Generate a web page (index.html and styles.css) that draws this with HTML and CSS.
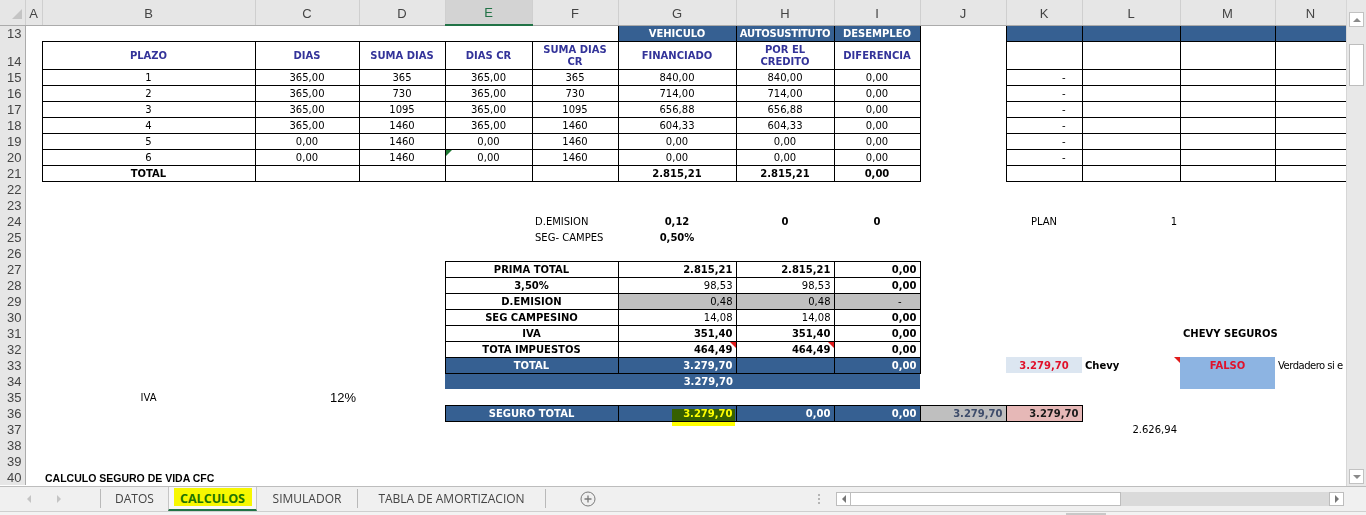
FILE: index.html
```html
<!DOCTYPE html>
<html lang="es">
<head>
<meta charset="utf-8">
<title>CALCULOS</title>
<link rel="stylesheet" href="styles.css">
</head>
<body>
<div class="app">
  <div class="main">
    <div class="sheet">
      <table class="grid">
        <colgroup>
          <col class="w-rh"><col class="w-a"><col class="w-b"><col class="w-c"><col class="w-d"><col class="w-e"><col class="w-f"><col class="w-g"><col class="w-h"><col class="w-i"><col class="w-j"><col class="w-k"><col class="w-l"><col class="w-m"><col class="w-n">
        </colgroup>
        <tr class="colhdr">
          <th class="corner"><span class="selall"></span></th>
          <th>A</th><th>B</th><th>C</th><th>D</th><th class="sel">E</th><th>F</th><th>G</th><th>H</th><th>I</th><th>J</th><th>K</th><th>L</th><th>M</th><th>N</th>
        </tr>
        <tr>
          <th class="rh">13</th><td></td><td></td><td></td><td></td><td></td><td></td>
          <td class="bx blu c">VEHICULO</td><td class="bx blu c tight">AUTOSUSTITUTO</td><td class="bx blu c">DESEMPLEO</td><td></td>
          <td class="bx blu"></td><td class="bx blu"></td><td class="bx blu"></td><td class="bx blu"></td>
        </tr>
        <tr class="tall">
          <th class="rh">14</th><td></td>
          <td class="bx hd">PLAZO</td><td class="bx hd">DIAS</td><td class="bx hd">SUMA DIAS</td><td class="bx hd">DIAS CR</td>
          <td class="bx hd">SUMA DIAS<br>CR</td><td class="bx hd">FINANCIADO</td><td class="bx hd">POR EL<br>CREDITO</td><td class="bx hd">DIFERENCIA</td><td></td>
          <td class="bx"></td><td class="bx"></td><td class="bx"></td><td class="bx"></td>
        </tr>
        <tr>
          <th class="rh">15</th><td></td>
          <td class="bx c">1</td><td class="bx c">365,00</td><td class="bx c">365</td><td class="bx c">365,00</td><td class="bx c">365</td><td class="bx c">840,00</td><td class="bx c">840,00</td><td class="bx c">0,00</td><td></td>
          <td class="bx dash">-</td><td class="bx"></td><td class="bx"></td><td class="bx"></td>
        </tr>
        <tr>
          <th class="rh">16</th><td></td>
          <td class="bx c">2</td><td class="bx c">365,00</td><td class="bx c">730</td><td class="bx c">365,00</td><td class="bx c">730</td><td class="bx c">714,00</td><td class="bx c">714,00</td><td class="bx c">0,00</td><td></td>
          <td class="bx dash">-</td><td class="bx"></td><td class="bx"></td><td class="bx"></td>
        </tr>
        <tr>
          <th class="rh">17</th><td></td>
          <td class="bx c">3</td><td class="bx c">365,00</td><td class="bx c">1095</td><td class="bx c">365,00</td><td class="bx c">1095</td><td class="bx c">656,88</td><td class="bx c">656,88</td><td class="bx c">0,00</td><td></td>
          <td class="bx dash">-</td><td class="bx"></td><td class="bx"></td><td class="bx"></td>
        </tr>
        <tr>
          <th class="rh">18</th><td></td>
          <td class="bx c">4</td><td class="bx c">365,00</td><td class="bx c">1460</td><td class="bx c">365,00</td><td class="bx c">1460</td><td class="bx c">604,33</td><td class="bx c">604,33</td><td class="bx c">0,00</td><td></td>
          <td class="bx dash">-</td><td class="bx"></td><td class="bx"></td><td class="bx"></td>
        </tr>
        <tr>
          <th class="rh">19</th><td></td>
          <td class="bx c">5</td><td class="bx c">0,00</td><td class="bx c">1460</td><td class="bx c">0,00</td><td class="bx c">1460</td><td class="bx c">0,00</td><td class="bx c">0,00</td><td class="bx c">0,00</td><td></td>
          <td class="bx dash">-</td><td class="bx"></td><td class="bx"></td><td class="bx"></td>
        </tr>
        <tr>
          <th class="rh">20</th><td></td>
          <td class="bx c">6</td><td class="bx c">0,00</td><td class="bx c">1460</td><td class="bx c mark"><span class="tri-g"></span>0,00</td><td class="bx c">1460</td><td class="bx c">0,00</td><td class="bx c">0,00</td><td class="bx c">0,00</td><td></td>
          <td class="bx dash">-</td><td class="bx"></td><td class="bx"></td><td class="bx"></td>
        </tr>
        <tr>
          <th class="rh">21</th><td></td>
          <td class="bx c bd">TOTAL</td><td class="bx"></td><td class="bx"></td><td class="bx"></td><td class="bx"></td><td class="bx c bd">2.815,21</td><td class="bx c bd">2.815,21</td><td class="bx c bd">0,00</td><td></td>
          <td class="bx"></td><td class="bx"></td><td class="bx"></td><td class="bx"></td>
        </tr>
        <tr><th class="rh">22</th><td colspan="14"></td></tr>
        <tr><th class="rh">23</th><td colspan="14"></td></tr>
        <tr>
          <th class="rh">24</th><td colspan="5"></td>
          <td class="l">D.EMISION</td><td class="c bd">0,12</td><td class="c bd">0</td><td class="c bd">0</td><td></td>
          <td class="c">PLAN</td><td class="r">1</td><td></td><td></td>
        </tr>
        <tr>
          <th class="rh">25</th><td colspan="5"></td>
          <td class="l">SEG- CAMPES</td><td class="c bd">0,50%</td><td colspan="7"></td>
        </tr>
        <tr><th class="rh">26</th><td colspan="14"></td></tr>
        <tr>
          <th class="rh">27</th><td colspan="4"></td>
          <td class="bx c bd" colspan="2">PRIMA TOTAL</td><td class="bx r bd">2.815,21</td><td class="bx r bd">2.815,21</td><td class="bx r bd">0,00</td><td colspan="5"></td>
        </tr>
        <tr>
          <th class="rh">28</th><td colspan="4"></td>
          <td class="bx c bd" colspan="2">3,50%</td><td class="bx r">98,53</td><td class="bx r">98,53</td><td class="bx r bd">0,00</td><td colspan="5"></td>
        </tr>
        <tr>
          <th class="rh">29</th><td colspan="4"></td>
          <td class="bx c bd" colspan="2">D.EMISION</td><td class="bx r gry">0,48</td><td class="bx r gry">0,48</td><td class="bx gry dash2">-</td><td colspan="5"></td>
        </tr>
        <tr>
          <th class="rh">30</th><td colspan="4"></td>
          <td class="bx c bd" colspan="2">SEG CAMPESINO</td><td class="bx r">14,08</td><td class="bx r">14,08</td><td class="bx r bd">0,00</td><td colspan="5"></td>
        </tr>
        <tr>
          <th class="rh">31</th><td colspan="4"></td>
          <td class="bx c bd" colspan="2">IVA</td><td class="bx r bd">351,40</td><td class="bx r bd">351,40</td><td class="bx r bd">0,00</td><td colspan="3"></td>
          <td class="l bd">CHEVY SEGUROS</td><td></td>
        </tr>
        <tr>
          <th class="rh">32</th><td colspan="4"></td>
          <td class="bx c bd" colspan="2">TOTA IMPUESTOS</td><td class="bx r bd mark"><span class="tri-r"></span>464,49</td><td class="bx r bd mark"><span class="tri-r"></span>464,49</td><td class="bx r bd">0,00</td><td colspan="5"></td>
        </tr>
        <tr>
          <th class="rh">33</th><td colspan="4"></td>
          <td class="bx blu c" colspan="2">TOTAL</td><td class="bx blu r">3.279,70</td><td class="bx blu"></td><td class="bx blu r">0,00</td><td></td>
          <td class="c bd red k33">3.279,70</td><td class="l bd mark">Chevy<span class="tri-r"></span></td><td class="c bd red m33">FALSO</td><td class="l squeeze">Verdadero si e</td>
        </tr>
        <tr>
          <th class="rh">34</th><td colspan="4"></td>
          <td class="blu r" colspan="3">3.279,70</td><td class="blu" colspan="2"></td><td colspan="3"></td><td class="m33"></td><td></td>
        </tr>
        <tr>
          <th class="rh">35</th><td></td>
          <td class="c">IVA</td><td class="r cal">12%</td><td colspan="11"></td>
        </tr>
        <tr>
          <th class="rh">36</th><td colspan="4"></td>
          <td class="bx blu c" colspan="2">SEGURO TOTAL</td><td class="bx blu r mark">3.279,70<span class="hl"></span></td><td class="bx blu r">0,00</td><td class="bx blu r">0,00</td>
          <td class="bx r bd j36">3.279,70</td><td class="bx r bd k36">3.279,70</td><td colspan="3"></td>
        </tr>
        <tr>
          <th class="rh">37</th><td colspan="11"></td><td class="r">2.626,94</td><td colspan="2"></td>
        </tr>
        <tr><th class="rh">38</th><td colspan="14"></td></tr>
        <tr><th class="rh">39</th><td colspan="14"></td></tr>
        <tr>
          <th class="rh">40</th><td></td><td class="l cal bd">CALCULO SEGURO DE VIDA CFC</td><td colspan="12"></td>
        </tr>
      </table>
    </div>
    <div class="vsb">
      <div class="vbtn"><span class="up"></span></div>
      <div class="vthumb"></div>
      <div class="vfill"></div>
      <div class="vbtn"><span class="down"></span></div>
    </div>
  </div>
  <div class="tabbar">
    <div class="nav"><span class="navl"></span><span class="navr"></span></div>
    <div class="tab t-datos">DATOS</div>
    <div class="tab active">CALCULOS<span class="hl2"></span></div>
    <div class="tab t-sim">SIMULADOR</div>
    <div class="tab t-tabla">TABLA DE AMORTIZACION</div>
    <div class="add">
      <svg width="16" height="16" viewBox="0 0 16 16"><circle cx="8" cy="8" r="7" fill="none" stroke="#7a7a7a" stroke-width="1"/><path d="M8 4.5v7M4.5 8h7" stroke="#7a7a7a" stroke-width="1.3"/></svg>
    </div>
    <div class="dots"><span></span><span></span><span></span></div>
    <div class="hsb">
      <div class="hbtn"><span class="left"></span></div>
      <div class="hthumb"></div>
      <div class="htrack"></div>
      <div class="hbtn"><span class="right"></span></div>
    </div>
  </div>
  <div class="status"><span class="sgrip"></span></div>
</div>
</body>
</html>
```

FILE: styles.css
```css
* { box-sizing: border-box; }
html, body { margin: 0; padding: 0; background: #fff; overflow: hidden; }
body { width: 1366px; height: 515px; font-family: "DejaVu Sans", Verdana, sans-serif; }

.app { display: flex; flex-direction: column; width: 1366px; height: 515px; }
.main { display: flex; height: 486px; flex-shrink: 0; }
.sheet { width: 1346px; height: 486px; overflow: hidden; background: #fff; flex-shrink: 0; }

.grid { border-collapse: collapse; table-layout: fixed; width: 1346px; font-size: 10px; color: #000; }
.w-rh { width: 25px; } .w-a { width: 17px; } .w-b { width: 213px; } .w-c { width: 104px; }
.w-d { width: 86px; } .w-e { width: 87px; } .w-f { width: 86px; } .w-g { width: 118px; }
.w-h { width: 98px; } .w-i { width: 86px; } .w-j { width: 86px; } .w-k { width: 76px; }
.w-l { width: 98px; } .w-m { width: 95px; } .w-n { width: 71px; }

.grid tr { height: 16px; }
.grid tr.tall { height: 28px; }
.grid tr.colhdr { height: 25px; }
.grid td { padding: 2px 3px 0; white-space: nowrap; line-height: 12px; vertical-align: middle; }

.colhdr th { background: #e6e6e6; color: #444; font: 400 13px "Liberation Sans", Arial, sans-serif; border-right: 1px solid #cfcfcf; border-bottom: 1px solid #ababab; vertical-align: bottom; padding: 0 0 4px; text-align: center; }
.colhdr th.sel { background: #d3d3d3; border-bottom: 2px solid #217346; color: #217346; }
.colhdr th.corner { text-align: right; padding: 0 3px 3px 0; }
.selall { display: inline-block; width: 0; height: 0; border-left: 10px solid transparent; border-bottom: 10px solid #c4c4c4; }

.rh { background: #e6e6e6; color: #444; font: 400 13px "Liberation Sans", Arial, sans-serif; text-align: right; padding: 0 3px 0 0; line-height: 14px; vertical-align: bottom; border-right: 1px solid #ababab; }

.bx { border: 1px solid #000; }
.c { text-align: center; }
.r { text-align: right; }
.l { text-align: left; }
.bd { font-weight: 700; }
.hd { color: #333399; font-weight: 700; text-align: center; }
.blu { background: #366092; color: #fff; font-weight: 700; }
.grid td.tight { letter-spacing: -0.3px; padding-left: 0; padding-right: 0; }
.gry { background: #c0c0c0; }
.grid td.dash { text-align: right; padding-right: 16px; }
.grid td.dash2 { text-align: right; padding-right: 18px; }
.red { color: #e0112b; }
.k33 { background: #dce6f1; }
.m33 { background: #8db4e2; }
.j36 { background: #bfbfbf; color: #3e4d6b; }
.k36 { background: #e6b8b7; color: #1a1a1a; }
.squeeze { letter-spacing: -0.5px; }
.cal { font-family: "Liberation Sans", Arial, sans-serif; }
td.r.cal { font-size: 13px; }
td.l.cal { font-size: 10.5px; }

.mark { position: relative; }
.tri-r { position: absolute; top: 0; right: 0; width: 0; height: 0; border-top: 6px solid #e01b1b; border-left: 6px solid transparent; }
.tri-g { position: absolute; top: 0; left: 0; width: 0; height: 0; border-top: 6px solid #1e7a34; border-right: 6px solid transparent; }
.hl { position: absolute; right: 1px; top: 3px; width: 63px; height: 17px; background: #ffff00; mix-blend-mode: multiply; }

/* vertical scrollbar */
.vsb { width: 20px; height: 486px; background: #e8e8e8; display: flex; flex-direction: column; align-items: center; padding: 12px 0 2px; border-left: 1px solid #d6d6d6; flex-shrink: 0; }
.vbtn { width: 15px; height: 15px; background: #fff; border: 1px solid #c2c2c2; display: flex; align-items: center; justify-content: center; }
.vthumb { width: 15px; height: 42px; margin-top: 17px; background: #fff; border: 1px solid #bdbdbd; }
.vfill { flex: 1; }
.up { width: 0; height: 0; border-left: 4px solid transparent; border-right: 4px solid transparent; border-bottom: 4px solid #8a8a8a; }
.down { width: 0; height: 0; border-left: 4px solid transparent; border-right: 4px solid transparent; border-top: 4px solid #8a8a8a; }

/* tab bar */
.tabbar { height: 26px; flex-shrink: 0; background: #f0f0f0; border-top: 1px solid #bdbdbd; border-bottom: 1px solid #cfcfcf; display: flex; align-items: stretch; font-family: "Open Sans", "Liberation Sans", sans-serif; font-size: 12px; color: #444; }
.tabbar > div { flex-shrink: 0; }
.nav { width: 100px; display: flex; align-items: center; gap: 26px; padding-left: 27px; }
.navl { width: 0; height: 0; border-top: 4px solid transparent; border-bottom: 4px solid transparent; border-right: 4px solid #c4c4c4; }
.navr { width: 0; height: 0; border-top: 4px solid transparent; border-bottom: 4px solid transparent; border-left: 4px solid #c4c4c4; }
.tab { display: flex; align-items: center; justify-content: center; border-left: 1px solid #b9b9b9; margin: 2px 0 3px; position: relative; }
.t-datos { width: 68px; }
.t-sim { width: 100px; }
.t-tabla { width: 189px; border-right: 1px solid #b9b9b9; }
.tab.active { width: 89px; margin: 0; background: #f7f7f7; color: #217346; font-weight: 700; font-size: 12.5px; border-left: 1px solid #c6c6c6; border-right: 1px solid #c6c6c6; border-bottom: 2px solid #217346; }
.tab.active + .tab { border-left: none; }
.hl2 { position: absolute; left: 5px; top: 1px; width: 78px; height: 18px; background: #ffff00; mix-blend-mode: multiply; }
.add { width: 54px; display: flex; align-items: center; padding-left: 34px; }
.dots { width: 236px; display: flex; flex-direction: column; align-items: flex-end; justify-content: center; gap: 2px; padding-right: 16px; }
.dots span { width: 2px; height: 2px; background: #b5b5b5; }
.hsb { width: 510px; display: flex; align-items: center; padding-right: 2px; }
.hbtn { width: 15px; height: 14px; background: #fff; border: 1px solid #bdbdbd; display: flex; align-items: center; justify-content: center; flex-shrink: 0; }
.hthumb { width: 270px; height: 14px; background: #fff; border: 1px solid #bdbdbd; border-left: none; flex-shrink: 0; }
.htrack { flex: 1; height: 14px; background: #dadada; }
.left { width: 0; height: 0; border-top: 4px solid transparent; border-bottom: 4px solid transparent; border-right: 4px solid #777; }
.right { width: 0; height: 0; border-top: 4px solid transparent; border-bottom: 4px solid transparent; border-left: 4px solid #777; }

.status { flex: 1; background: #f3f3f3; display: flex; padding-left: 1066px; align-items: flex-end; }
.sgrip { width: 40px; height: 2px; background: #c8c8c8; }
```
